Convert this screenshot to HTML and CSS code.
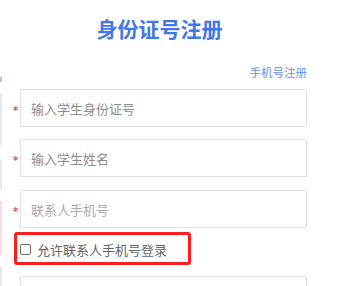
FILE: index.html
```html
<!DOCTYPE html>
<html lang="zh-CN">
<head>
<meta charset="utf-8">
<title>身份证号注册</title>
<link rel="stylesheet" href="styles.css">
</head>
<body>
<div class="page">
  <div class="edge">
    <span class="edge-dot"></span>
    <span class="edge-seg seg1"></span>
    <span class="edge-seg seg2"></span>
    <span class="edge-seg seg3"></span>
    <span class="edge-seg seg4"></span>
  </div>
  <div class="form">
    <h1 class="title">身份证号注册</h1>
    <div class="switch"><a class="switch-link">手机号注册</a></div>
    <div class="row row1">
      <span class="star">*</span>
      <input class="field dark" type="text" placeholder="输入学生身份证号">
    </div>
    <div class="row row2">
      <span class="star">*</span>
      <input class="field dark" type="text" placeholder="输入学生姓名">
    </div>
    <div class="row row3">
      <span class="star">*</span>
      <input class="field light" type="text" placeholder="联系人手机号">
    </div>
    <label class="allow">
      <span class="box"></span>
      <span class="allow-text">允许联系人手机号登录</span>
    </label>
    <div class="row row4">
      <span class="star blank"></span>
      <input class="field light" type="text">
    </div>
  </div>
</div>
</body>
</html>
```
FILE: styles.css
```css
html, body {
  margin: 0;
  padding: 0;
  background: #ffffff;
  overflow: hidden;
}
body {
  width: 352px;
  height: 286px;
  font-family: "Noto Sans CJK SC", "Noto Sans", sans-serif;
}
.page {
  display: flex;
  height: 286px;
  overflow: hidden;
}
.edge {
  width: 2px;
  display: flex;
  flex-direction: column;
  padding-top: 77px;
}
.edge-dot {
  height: 5px;
  background: #a9c6f2;
}
.edge-seg { display: block; }
.seg1 { margin-top: 11px; height: 54px; background: #e8e8e8; }
.seg2 { margin-top: 15px; height: 31px; background: #e8e8e8; }
.seg3 { margin-top: 11px; height: 54px; background: #fbdcdc; }
.seg4 { margin-top: 13px; height: 20px; background: #e8e8e8; }

.form {
  margin-left: 10px;
  width: 295px;
  display: flex;
  flex-direction: column;
}
.title {
  margin: 16px 0 0 0;
  font-size: 21px;
  line-height: 24px;
  font-weight: 700;
  color: #4277e6;
  text-align: center;
  letter-spacing: 0;
}
.switch {
  margin-top: 23px;
  text-align: right;
  line-height: 14px;
  height: 14px;
}
.switch-link {
  font-size: 11.5px;
  color: #6690ee;
  cursor: pointer;
}
.row {
  display: flex;
  align-items: center;
  height: 38px;
  flex-shrink: 0;
}
.row1 { margin-top: 12px; }
.row2 { margin-top: 12px; }
.row3 { margin-top: 13px; }
.row4 { margin-top: 11px; }
.star {
  width: 8px;
  color: #f0503c;
  font-size: 10px;
  line-height: 10px;
  font-weight: 700;
  padding-top: 6px;
  padding-left: 1px;
  box-sizing: border-box;
  font-family: "DejaVu Sans", sans-serif;
}
.field {
  box-sizing: border-box;
  width: 287px;
  height: 38px;
  margin: 0;
  border: 1px solid #e2e2e2;
  border-radius: 1px;
  padding: 0 0 0 10px;
  font-family: "Noto Sans CJK SC", "Noto Sans", sans-serif;
  font-size: 13px;
  outline: none;
  background: #fff;
}
.field.dark::placeholder { color: #8c8c8c; }
.field.light::placeholder { color: #ababab; }

.allow {
  margin: 4px 0 0 2px;
  box-sizing: border-box;
  width: 177px;
  height: 33px;
  flex-shrink: 0;
  border: 3px solid #ff1e1e;
  border-radius: 3px;
  display: flex;
  align-items: center;
  padding: 2px 0 0 3px;
}
.box {
  box-sizing: border-box;
  width: 11px;
  height: 11px;
  border: 1px solid #707070;
  border-radius: 2px;
  background: #fff;
}
.allow-text {
  margin-left: 6px;
  font-size: 13px;
  line-height: 16px;
  color: #666666;
}
```
